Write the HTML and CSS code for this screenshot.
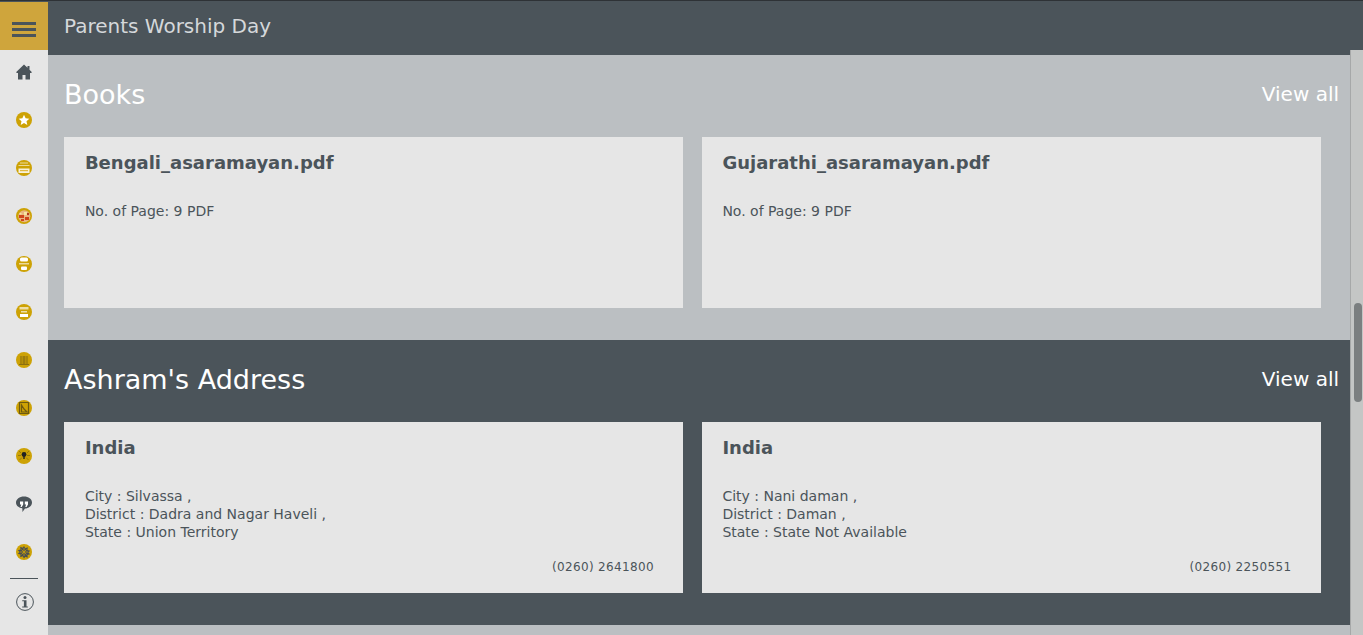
FILE: index.html
```html
<!DOCTYPE html>
<html lang="en">
<head>
    <meta charset="UTF-8">
    <title>Parents Worship Day</title>
    <link rel="stylesheet" href="styles.css">
</head>
<body>
    <div class="app">
        <aside class="rail">
            <div class="burger"><span></span><span></span><span></span></div>
            <nav class="rail-nav">
                <svg class="ico" viewBox="0 0 16 16"><path fill="#4b545a" d="M8 .5 L11.500 3.800 V2 H13.500 V5.700 L16 8.300 L15 9 H14 V15.500 H9.500 V11 H6.500 V15.500 H2 V9 H1 L0 8.300 Z"/></svg>
                <svg class="ico" viewBox="0 0 16 16"><circle class="gold" cx="8" cy="8" r="8"/><path fill="#fff" d="M8 2.800 L9.600 6.300 L13.300 6.700 L10.500 9.200 L11.300 12.900 L8 11 L4.700 12.900 L5.500 9.200 L2.700 6.700 L6.400 6.300 Z"/></svg>
                <svg class="ico" viewBox="0 0 16 16"><circle class="gold" cx="8" cy="8" r="8"/><path fill="#fff" opacity=".6" d="M4 2.500h8v1H4zM2.500 5h11v1h-11z"/><rect x="2.500" y="8.500" width="11" height="4.500" fill="#fff" opacity=".85"/><rect x="4" y="10" width="8" height="1.200" fill="#e0b840"/></svg>
                <svg class="ico" viewBox="0 0 16 16"><circle class="gold" cx="8" cy="8" r="8"/><circle cx="8.300" cy="8.300" r="6" fill="#e9b682"/><path fill="#d0451c" d="M3 7h5v3H3zM9 9h4v3H9zM5 11h3v2H5z"/><path fill="#f6e6a0" d="M8 4h3v3H8zM3.500 5h2v1.500h-2z"/><circle cx="12" cy="6" r="1.200" fill="#b5391a"/></svg>
                <svg class="ico" viewBox="0 0 16 16"><circle class="gold" cx="8" cy="8" r="8"/><rect x="4" y="1.500" width="8" height="4" rx="1.500" fill="#fff"/><path fill="#fff" opacity=".6" d="M3 7h10v1.500H3z"/><rect x="5" y="10.500" width="6" height="3.500" rx="1" fill="#fff"/></svg>
                <svg class="ico" viewBox="0 0 16 16"><circle class="gold" cx="8" cy="8" r="8"/><path fill="#fff" opacity=".65" d="M3.500 3h9v2.500h-9zM5 7h6v1.500H5z"/><rect x="4" y="10" width="8" height="3" fill="#fff"/></svg>
                <svg class="ico" viewBox="0 0 16 16"><circle class="gold" cx="8" cy="8" r="8"/><path fill="none" stroke="#8a6f10" stroke-width="1.100" d="M3 12.500h10M5 4v8.500M7.200 4v8.500M8.800 4v8.500M11 4v8.500"/></svg>
                <svg class="ico" viewBox="0 0 16 16"><circle class="gold" cx="8" cy="8" r="8"/><path fill="none" stroke="#6e5a10" stroke-width="1.200" d="M3.500 2.500h9v11h-9zM5.500 5 L8 9 L11 12H5.500z"/></svg>
                <svg class="ico" viewBox="0 0 16 16"><circle class="gold" cx="8" cy="8" r="8"/><circle cx="8" cy="6.500" r="2.400" fill="#222"/><path stroke="#222" stroke-width="1.400" d="M8 8v3"/><path stroke="#8a6f10" stroke-width=".8" d="M3 3l2 2M13 3l-2 2M2 7.500h3M14 7.500h-3M3.500 12l2.500-2.500M12.500 12L10 9.500"/></svg>
                <svg class="ico" viewBox="0 0 16 16"><path fill="#4b545a" d="M8 .5C12.500.5 16 3 16 6.500S12.500 12.500 9 12.500L6.500 16 6.300 12.300C3 11.800 0 9.800 0 6.500S3.500.5 8 .5Z"/><path fill="#fff" d="M4 5.500h3.200v3L5.700 11H4.500L5.300 8.500H4zM8.800 5.500H12v3L10.500 11H9.300L10.100 8.500H8.800z"/></svg>
                <svg class="ico" viewBox="0 0 16 16"><circle class="gold" cx="8" cy="8" r="8"/><path fill="#4a4f50" d="M8 2l1.300 2.300 2.500-1-.3 2.700 2.700.7-1.900 1.800 1.900 1.800-2.700.7.300 2.700-2.500-1L8 14.500l-1.300-2.300-2.500 1 .3-2.700-2.700-.7 1.900-1.800-1.900-1.800 2.700-.7-.3-2.700 2.500 1z"/><path stroke="#d0a404" stroke-width=".7" d="M4 8h8M8 4v8M5.500 5.500l5 5M10.500 5.500l-5 5"/></svg>
            </nav>
            <div class="rail-line"></div>
            <svg class="info" viewBox="0 0 18 18"><circle cx="9" cy="9" r="8.400" fill="none" stroke="#4b545a" stroke-width="1"/><circle cx="9" cy="4.600" r="1.500" fill="#4b545a"/><path fill="#4b545a" d="M6.200 7.200H10.500V13.500H11.800V14.600H6.200V13.500H7.900V8.300H6.200Z"/></svg>
        </aside>

        <div class="page">
            <header class="topbar">Parents Worship Day</header>
            <main>
                <section class="band band-light">
                    <div class="band-head">
                        <h2>Books</h2>
                        <a class="view-all" href="#">View all</a>
                    </div>
                    <div class="cards">
                        <div class="card">
                            <h3>Bengali_asaramayan.pdf</h3>
                            <p>No. of Page: 9 PDF</p>
                        </div>
                        <div class="card">
                            <h3>Gujarathi_asaramayan.pdf</h3>
                            <p>No. of Page: 9 PDF</p>
                        </div>
                    </div>
                </section>
                <section class="band band-dark">
                    <div class="band-head">
                        <h2>Ashram's Address</h2>
                        <a class="view-all" href="#">View all</a>
                    </div>
                    <div class="cards">
                        <div class="card">
                            <h3>India</h3>
                            <p>City : Silvassa ,<br>District : Dadra and Nagar Haveli ,<br>State : Union Territory</p>
                            <div class="phone">(0260) 2641800</div>
                        </div>
                        <div class="card">
                            <h3>India</h3>
                            <p>City : Nani daman ,<br>District : Daman ,<br>State : State Not Available</p>
                            <div class="phone">(0260) 2250551</div>
                        </div>
                    </div>
                </section>
                <section class="band-end"></section>
            </main>
            <div class="scrollbar"><div class="thumb"></div></div>
        </div>
    </div>
</body>
</html>
```

FILE: styles.css
```css
html, body {
    margin: 0;
    height: 100%;
    overflow: hidden;
}
body {
    font-family: "DejaVu Sans", sans-serif;
    background: #bbbfc2;
    color: #4b545a;
}
.app {
    display: flex;
    height: 635px;
    border-top: 1px solid #2e3236;
    box-sizing: border-box;
}
.rail {
    width: 48px;
    flex: none;
    background: #e6e6e6;
    display: flex;
    flex-direction: column;
    align-items: center;
}
.burger {
    width: 48px;
    height: 48px;
    margin-top: 1px;
    box-sizing: border-box;
    padding-top: 7px;
    background: #cfa53c;
    display: flex;
    flex-direction: column;
    align-items: center;
    justify-content: center;
    gap: 3px;
    box-shadow: 0 -1px 0 #4b545a;
}
.burger span {
    width: 24px;
    height: 3px;
    background: #4b545a;
}
.rail-nav {
    display: flex;
    flex-direction: column;
    gap: 32px;
    padding-top: 14px;
}
.ico {
    display: block;
    width: 16px;
    height: 16px;
}
.gold {
    fill: #cda205;
}
.rail-line {
    width: 28px;
    height: 1px;
    background: #4b545a;
    margin-top: 18px;
}
.info {
    width: 18px;
    height: 18px;
    margin: 14px 0 0 2px;
}
.page {
    flex: 1;
    position: relative;
    min-width: 0;
}
.topbar {
    height: 54px;
    box-sizing: border-box;
    background: #4b545a;
    color: #d5d8da;
    font-size: 20px;
    line-height: 50px;
    padding-left: 16px;
}
.band {
    height: 285px;
    box-sizing: border-box;
    padding: 0 24px 0 16px;
}
.band-light, .band-end {
    background: #bbbfc2;
}
.band-dark {
    background: #4b545a;
}
.band-end {
    height: 10px;
}
.band-head {
    height: 82px;
    box-sizing: border-box;
    padding-bottom: 4px;
    display: flex;
    justify-content: space-between;
    align-items: center;
    color: #fff;
}
.band-head h2 {
    margin: 0;
    font-size: 27px;
    font-weight: 400;
}
.view-all {
    color: #fff;
    text-decoration: none;
    font-size: 20px;
}
.cards {
    display: flex;
    gap: 18.5px;
}
.card {
    width: 619px;
    height: 171px;
    box-sizing: border-box;
    background: #e6e6e6;
    padding: 14px 20.9px;
    position: relative;
}
.card h3 {
    margin: 0 0 27px;
    font-size: 18px;
    line-height: 24px;
    font-weight: 700;
}
.card p {
    margin: 0;
    font-size: 14px;
    line-height: 18px;
}
.phone {
    position: absolute;
    right: 29px;
    bottom: 19px;
    font-size: 12px;
    letter-spacing: .35px;
}
.scrollbar {
    position: absolute;
    top: 49px;
    right: 0;
    bottom: 0;
    width: 12px;
    background: #c4c6c5;
    border-left: 1px solid #a6a8a8;
}
.thumb {
    position: absolute;
    top: 253px;
    left: 3px;
    width: 8px;
    height: 99px;
    border-radius: 4px;
    background: #7b7f80;
}
```
